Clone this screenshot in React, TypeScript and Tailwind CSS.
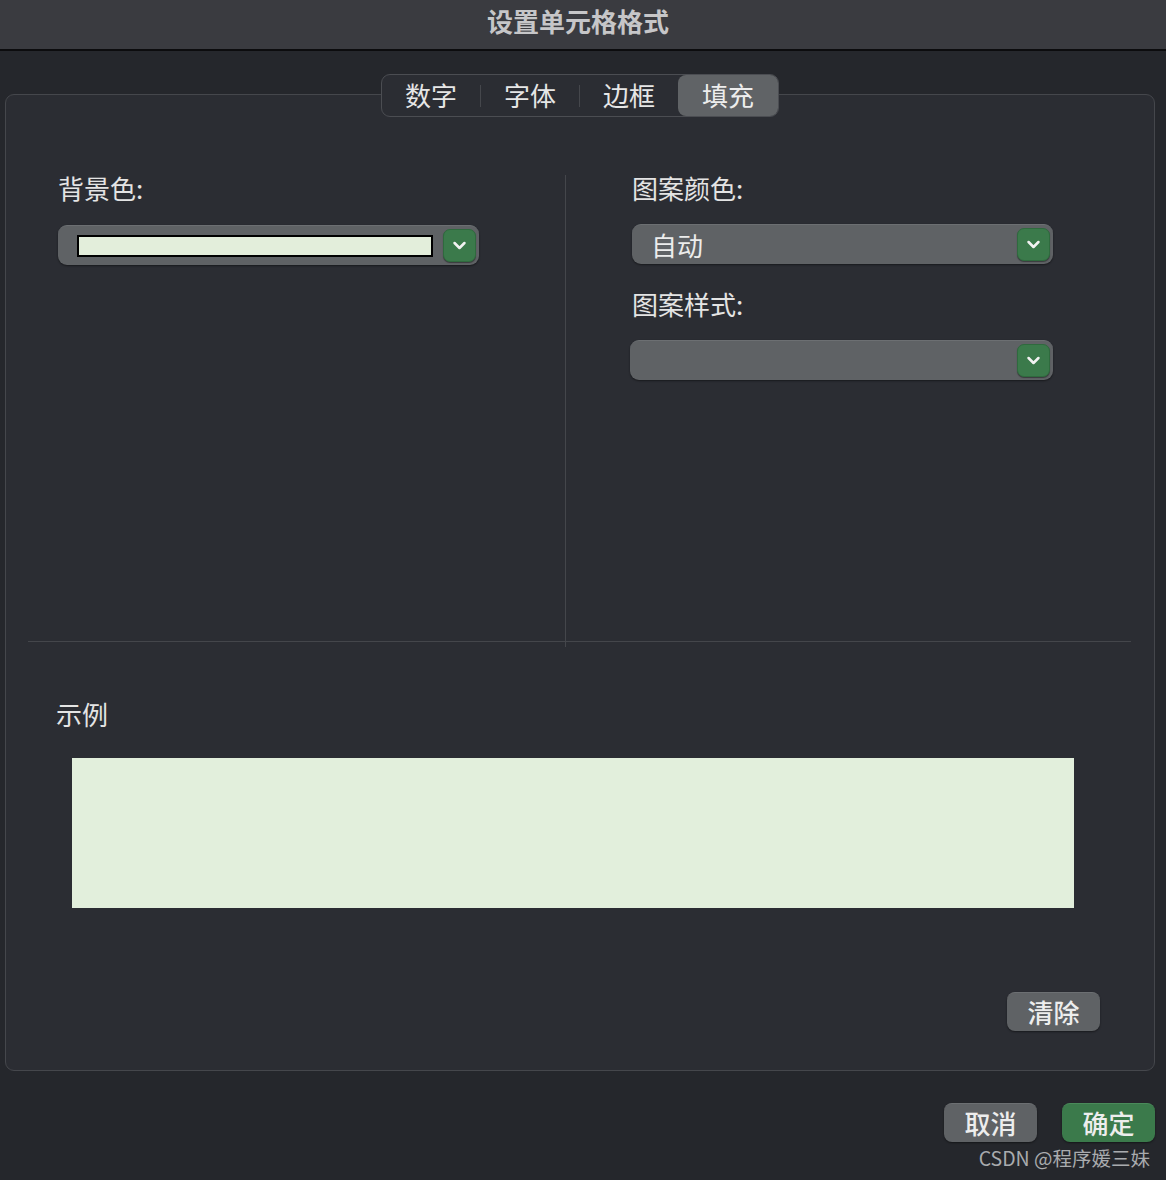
const font = { fontFamily: '"Noto Sans CJK SC", "Noto Sans", sans-serif' };

function Chevron() {
  return (
    <svg className="w-[17px] h-[17px]" viewBox="0 0 24 24" fill="none" stroke="currentColor" strokeWidth={3.6} strokeLinecap="round" strokeLinejoin="round">
      <path d="M5 8.5l7 7 7-7" />
    </svg>
  );
}

function GreenArrow() {
  return (
    <div className="w-[33px] h-[33px] rounded-[7px] bg-[#3b7a4b] border border-[#2f6a3e] shadow-[0_1px_1px_rgba(0,0,0,0.4)] flex items-center justify-center text-[#f2f2f2]">
      <Chevron />
    </div>
  );
}

function Select({ width, children }: { width: string; children?: React.ReactNode }) {
  return (
    <div className={`${width} h-[40px] rounded-[9px] bg-[#5f6265] border-t border-[#6c6f72] shadow-[0_1px_2px_rgba(0,0,0,0.45)] flex items-center pr-[3px]`}>
      <div className="flex-1 min-w-0 h-full flex items-center">{children}</div>
      <GreenArrow />
    </div>
  );
}

const tabs = ["数字", "字体", "边框", "填充"];

export default function App() {
  return (
    <div className="w-[1166px] h-[1180px] bg-[#25272c] flex flex-col text-[#e4e4e4]" style={font}>
      {/* Title bar */}
      <div className="h-[51px] bg-[#3a3b40] border-b-2 border-[#0c0c0e] flex items-center justify-center">
        <span className="text-[26px] font-semibold text-[#c6c6c8] leading-none -mt-[8px] -ml-[10px]">设置单元格格式</span>
      </div>

      <div className="pl-[5px] pr-[11px] pt-[43px]">
        <div className="relative h-[977px] rounded-[9px] border border-[#45474c] bg-[#2b2d33]">
          {/* Tabs */}
          <div className="absolute left-[375px] -top-[21px] w-[398px] h-[43px] rounded-[9px] border border-[#4b4d52] bg-[#2b2d33] flex items-center">
            {tabs.map((t, i) => {
              const active = i === tabs.length - 1;
              return (
                <div key={t} className="flex items-center h-full">
                  {i > 0 && i < tabs.length - 1 && <div className="w-px h-[22px] bg-[#45474c]" />}
                  <div
                    className={
                      active
                        ? "w-[100px] h-[41px] rounded-[8px] bg-[#606366] flex items-center justify-center text-[26px] text-[#ededed]"
                        : "w-[98px] h-full flex items-center justify-center text-[26px] text-[#e6e6e6]"
                    }
                  >
                    <span className="leading-none -mt-[2px]">{t}</span>
                  </div>
                </div>
              );
            })}
          </div>

          {/* Top section */}
          <div className="flex h-[546px]">
            <div className="w-[559px] pt-[78px] pl-[52px]">
              <div className="h-[30px] leading-[30px] text-[26px]">背景色:</div>
              <div className="mt-[22px]">
                <Select width="w-[421px]">
                  <div className="ml-[19px] w-[356px] h-[22px] border-2 border-black bg-[#e3eedb]" />
                </Select>
              </div>
            </div>
            <div className="w-px bg-[#44464b] mt-[80px] -mb-[6px]" />
            <div className="flex-1 pt-[78px] pl-[66px]">
              <div className="h-[30px] leading-[30px] text-[26px]">图案颜色:</div>
              <div className="mt-[21px]">
                <Select width="w-[421px]">
                  <span className="ml-[19px] text-[26px] leading-none text-[#ececec]">自动</span>
                </Select>
              </div>
              <div className="mt-[25px] h-[30px] leading-[30px] text-[26px]">图案样式:</div>
              <div className="mt-[21px] -ml-[2px]">
                <Select width="w-[423px]" />
              </div>
            </div>
          </div>

          <div className="ml-[22px] mr-[23px] h-px bg-[#44464b]" />

          {/* Sample */}
          <div className="pl-[50px] pt-[57px] h-[30px] leading-[30px] text-[26px] box-content">示例</div>
          <div className="ml-[66px] mt-[29px] w-[1002px] h-[150px] bg-[#e2efdc]" />

          <div className="flex justify-end pr-[54px] mt-[84px]">
            <button className="w-[93px] h-[39px] rounded-[8px] bg-[#5f6265] border-t border-[#6c6f72] shadow-[0_1px_2px_rgba(0,0,0,0.45)] text-[26px] leading-none text-[#ededed] font-medium flex items-center justify-center">
              清除
            </button>
          </div>
        </div>
      </div>

      {/* Footer buttons */}
      <div className="flex justify-end gap-[25px] pr-[11px] pt-[32px]">
        <button className="w-[93px] h-[39px] rounded-[8px] bg-[#5f6265] border-t border-[#6c6f72] shadow-[0_1px_2px_rgba(0,0,0,0.45)] text-[26px] leading-none text-[#ededed] font-medium flex items-center justify-center">
          取消
        </button>
        <button className="w-[93px] h-[39px] rounded-[8px] bg-[#3b7a4b] border-t border-[#4a8a5a] shadow-[0_1px_2px_rgba(0,0,0,0.45)] text-[26px] leading-none text-[#ededed] font-medium flex items-center justify-center">
          确定
        </button>
      </div>
      <div className="flex justify-end pr-[16px] mt-[4px]">
        <span className="text-[19.5px] leading-[24px] text-[#a9abae]">CSDN @程序媛三妹</span>
      </div>
    </div>
  );
}
